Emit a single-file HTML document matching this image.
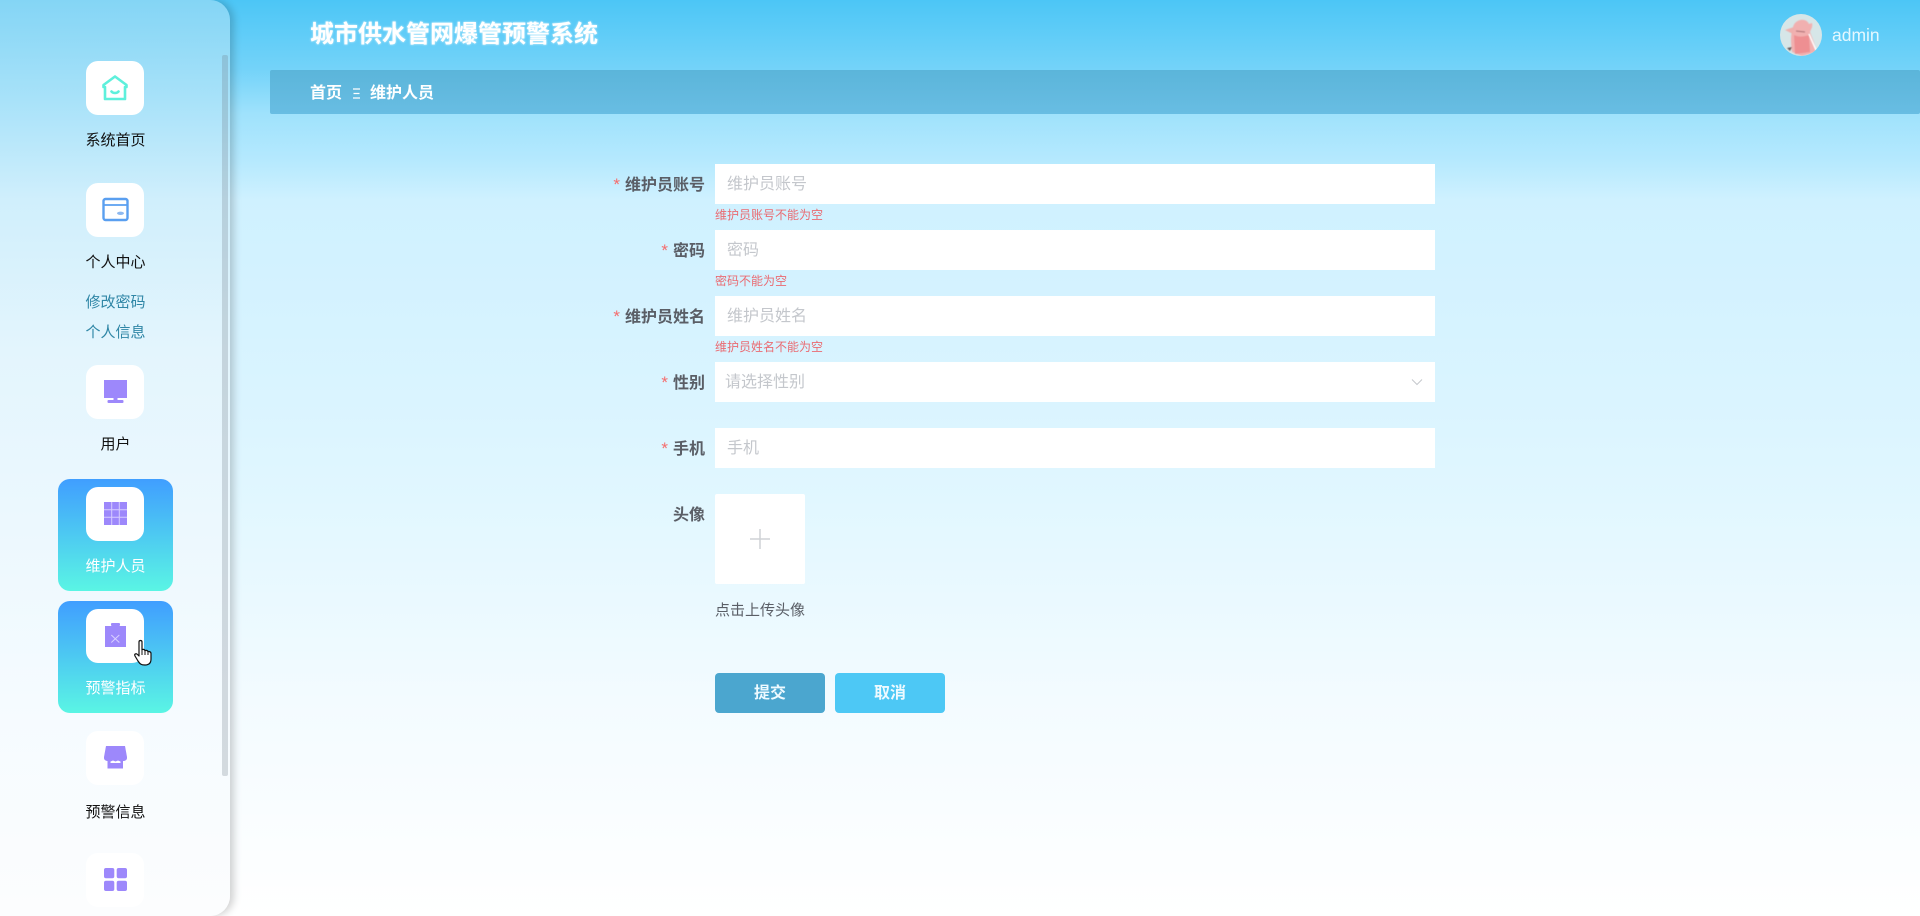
<!DOCTYPE html>
<html lang="zh"><head><meta charset="utf-8"><title>城市供水管网爆管预警系统</title>
<style>
*{box-sizing:border-box;margin:0;padding:0}
html,body{width:1920px;height:916px;overflow:hidden}
body{position:relative;font-family:"Liberation Sans","Noto Sans CJK SC",sans-serif;background:linear-gradient(180deg,#4cc6f6 0,#74d3f9 70px,#9fe2fc 114px,#b5e9fe 160px,#cff1ff 200px,#daf4ff 400px,#e1f7ff 500px,#f3fbff 700px,#fff 916px)}
.abs{position:absolute}
#side{position:absolute;left:0;top:0;width:230px;height:916px;border-radius:0 20px 20px 0;overflow:hidden;background:linear-gradient(180deg,#84d5f5 0,#a8e2f9 100px,#d0effc 200px,#e3f5fd 350px,#f5fbff 700px,#fcfdfe 916px);box-shadow:4px 0 8px rgba(0,0,0,.18)}
.sb{position:absolute;left:222px;top:55px;width:6px;height:721px;background:rgba(110,120,130,.26);border-radius:2px}
.active{position:absolute;left:58px;width:115px;height:112px;border-radius:12px;background:linear-gradient(180deg,#409eff,#5af5e4)}
.tile{position:absolute;left:86px;width:58px;height:54px;background:#fff;border-radius:12px}
.tile svg{position:absolute;left:14px;top:12px;width:30px;height:30px}
.lb{position:absolute;left:58px;width:115px;text-align:center;font-size:15px;line-height:20px;color:#111}
.sub{color:#2f86a6}
.w{color:#fff}
.inp{position:absolute;left:715px;width:720px;height:40px;background:#fff;font-size:16px;line-height:42px;color:#c4c7cc;padding-left:12px}
.lab{position:absolute;left:500px;width:205px;text-align:right;font-size:16px;font-weight:700;line-height:42px;color:#5a5e66}
.lab i{font-style:normal;font-weight:400;font-size:17px;color:#f56c6c;margin-right:5px}
.err{position:absolute;left:715px;font-size:12px;line-height:14px;color:#ea6b72}
.btn{position:absolute;top:673px;width:110px;height:40px;border-radius:4px;color:#eefaff;font-size:16px;font-weight:700;line-height:42px;text-align:center}
</style></head><body>

<div class="abs" style="left:270px;top:70px;width:1650px;height:44px;border-radius:2px;background:linear-gradient(180deg,#5bb5da,#68bde3)"></div>
<div class="abs" style="left:310px;top:17px;font-size:24px;line-height:36px;font-weight:700;color:#fff;text-shadow:0 0 2px rgba(255,255,255,.8);white-space:nowrap">城市供水管网爆管预警系统</div>
<div class="abs" style="left:310px;top:83px;font-size:16px;line-height:22px;font-weight:700;color:#fff;white-space:nowrap">首页</div>
<svg class="abs" style="left:352px;top:88px" width="9" height="11" viewBox="0 0 9 11"><path d="M1 1H8M1.500 5.500H7.500M1 10H8" stroke="#fff" stroke-width="1.300" fill="none"/></svg>
<div class="abs" style="left:370px;top:83px;font-size:16px;line-height:22px;font-weight:700;color:#fff;white-space:nowrap">维护人员</div>

<svg class="abs" style="left:1780px;top:14px" width="42" height="42" viewBox="0 0 42 42">
<defs><clipPath id="c"><circle cx="21" cy="21" r="21"/></clipPath><filter id="b"><feGaussianBlur stdDeviation=".5"/></filter></defs>
<g clip-path="url(#c)"><rect width="42" height="42" fill="#d6e6e8"/>
<g filter="url(#b)">
<path d="M12 38C11 30 10 22 13 13C15 5 26 3 29 10L32 9C33 13 31 15 30 18C33 26 36 32 36 38L22 42Z" fill="#f1b0b0"/>
<path d="M5 16L14 13L13 20Z" fill="#eeb0ae"/>
<path d="M14 21C20 24 26 22 29 21L30 38L15 40Z" fill="#ee8f92"/>
<path d="M29 20L36 36" stroke="#fff" stroke-width="1.500"/><path d="M16 17L25 18" stroke="#a76a70" stroke-width="1"/><path d="M7 34L12 33L10 37Z" fill="#6b5a5a"/>
</g></g></svg>
<div class="abs" style="left:1832px;top:24px;font-size:17.500px;line-height:22px;color:#e4f8ff;white-space:nowrap">admin</div>

<div id="side">
<div class="sb"></div>
<div class="active" style="top:479px"></div>
<div class="active" style="top:601px"></div>

<div class="tile" style="top:61px"><svg viewBox="0 0 30 30" fill="none" stroke="#5ef0dc" stroke-width="2.600"><path d="M15 3.500L26.500 12V14H25V26H5V14H3.500V12Z" stroke-linejoin="round"/><path d="M11.500 18.500C13 20.500 17 20.500 18.500 18.500" stroke-linecap="round"/></svg></div>
<div class="lb" style="top:131px">系统首页</div>

<div class="tile" style="top:183px"><svg viewBox="0 0 30 30" fill="none" stroke="#5a9ff0" stroke-width="2.400"><rect x="3.500" y="4" width="24" height="21" rx="2"/><path d="M3.500 10H27.500" stroke-width="1.800"/><ellipse cx="20.500" cy="18.300" rx="3.500" ry="1.700" fill="#8eb9f0" stroke="none"/></svg></div>
<div class="lb" style="top:253px">个人中心</div>
<div class="lb sub" style="top:293px">修改密码</div>
<div class="lb sub" style="top:323px">个人信息</div>

<div class="tile" style="top:365px"><svg viewBox="0 0 30 30" fill="#9d88fb"><rect x="4" y="3" width="23" height="18"/><rect x="13.500" y="21" width="4" height="2.500"/><rect x="7.500" y="23" width="16" height="3" rx="1"/></svg></div>
<div class="lb" style="top:435px">用户</div>

<div class="tile" style="top:487px"><svg viewBox="0 0 30 30" fill="#9d88fb"><rect x="4" y="3" width="23" height="23"/><path d="M11.700 3V26M19.300 3V26M4 10.700H27M4 18.300H27" stroke="#d6ccff" stroke-width="1"/></svg></div>
<div class="lb w" style="top:557px">维护人员</div>

<div class="tile" style="top:609px"><svg viewBox="0 0 30 30" fill="#9d88fb"><rect x="5" y="5" width="21" height="21"/><rect x="11" y="2" width="9" height="3" rx="1"/><path d="M11.300 14L19.300 21.500M19.300 14L11.300 21.500" stroke="#d9d0ff" stroke-width="1" fill="none"/></svg></div>
<div class="lb w" style="top:679px">预警指标</div>

<div class="tile" style="top:731px"><svg viewBox="0 0 30 30" fill="#9d88fb"><path d="M6 3H25L27 14V15C27 17 25 18 23 18H8C6 18 4 17 4 15V14Z"/><path d="M7.500 18H23V25.500H7.500Z"/><path d="M10.500 18.500L13 17.500L15.500 18.500L18 17.500L20.500 18.500V20H10.500Z" fill="#fff"/></svg></div>
<div class="lb" style="top:803px">预警信息</div>

<div class="tile" style="top:853px"><svg viewBox="0 0 30 30" fill="#9d88fb"><rect x="4" y="3" width="10.300" height="10.300" rx="2"/><rect x="16.700" y="3" width="10.300" height="10.300" rx="2"/><rect x="4" y="15.700" width="10.300" height="10.300" rx="2"/><rect x="16.700" y="15.700" width="10.300" height="10.300" rx="2"/></svg></div>
</div>

<svg class="abs" style="left:133px;top:639px" width="22" height="28" viewBox="0 0 22 28"><path d="M6 3C6 1 9 1 9 3V11C9 10 12 10 12 12C12 11 15 11 15 13C15 12 18 12.500 18 14.500V20C18 24 16 26 12 26C8 26 7 25 5 22L2 17C1 15 3 14 4.500 15.500L6 17Z" fill="#fff" stroke="#111" stroke-width="1.200" stroke-linejoin="round"/><path d="M9 11V16M12 12V16M15 13V16" stroke="#111" fill="none"/></svg>

<div class="lab" style="top:164px"><i>*</i>维护员账号</div>
<div class="inp" style="top:164px">维护员账号</div>
<div class="err" style="top:207.500px">维护员账号不能为空</div>

<div class="lab" style="top:230px"><i>*</i>密码</div>
<div class="inp" style="top:230px">密码</div>
<div class="err" style="top:273.500px">密码不能为空</div>

<div class="lab" style="top:296px"><i>*</i>维护员姓名</div>
<div class="inp" style="top:296px">维护员姓名</div>
<div class="err" style="top:339.500px">维护员姓名不能为空</div>

<div class="lab" style="top:362px"><i>*</i>性别</div>
<div class="inp" style="top:362px;padding-left:10px">请选择性别</div>
<svg class="abs" style="left:1411px;top:378px" width="12" height="8" viewBox="0 0 12 8"><path d="M1 1.500L6 6.500L11 1.500" fill="none" stroke="#c4c7cc" stroke-width="1"/></svg>

<div class="lab" style="top:428px"><i>*</i>手机</div>
<div class="inp" style="top:428px">手机</div>

<div class="lab" style="top:495px">头像</div>
<div class="abs" style="left:715px;top:494px;width:90px;height:90px;background:#fff;border-radius:2px"></div>
<svg class="abs" style="left:750px;top:529px" width="20" height="20" viewBox="0 0 20 20"><path d="M10 0V20M0 10H20" stroke="#cfd2d6" stroke-width="1.500"/></svg>
<div class="abs" style="left:715px;top:601px;width:100px;height:16px;overflow:hidden;font-size:15px;line-height:20px;color:#5a5e66;white-space:nowrap">点击上传头像</div>

<div class="btn" style="left:715px;background:#4ba6cf">提交</div>
<div class="btn" style="left:835px;background:#4dc8f5">取消</div>
</body></html>
